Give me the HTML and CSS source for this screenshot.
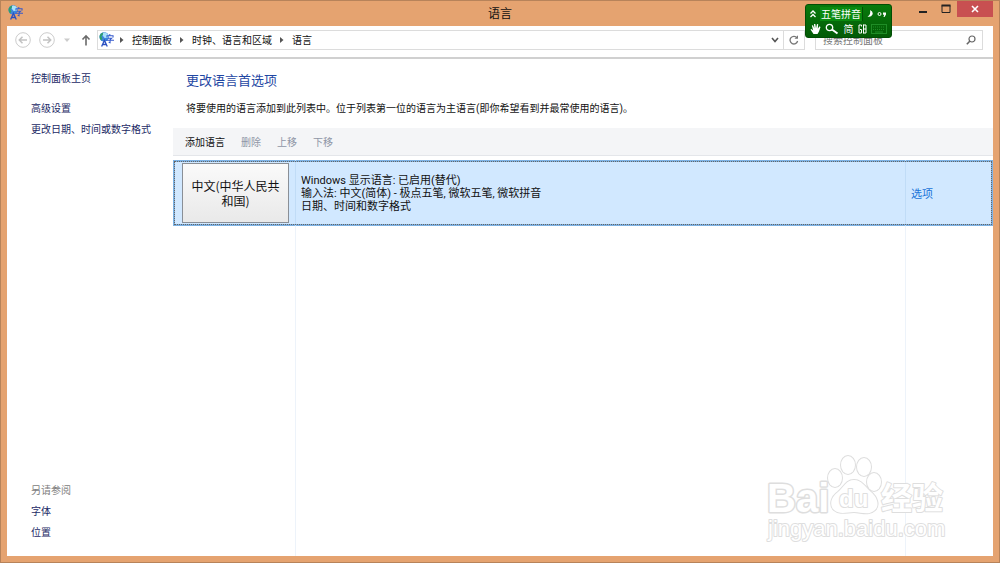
FILE: index.html
```html
<!DOCTYPE html>
<html lang="zh-CN">

<head>
    <meta charset="UTF-8">
    <meta name="viewport" content="width=device-width, initial-scale=1.0">
    <title>语言</title>
    <link rel="stylesheet" href="styles.css">
</head>

<body>
    <svg class="defs" aria-hidden="true">
        <symbol id="lang-icon" viewBox="0 0 16 16">
            <circle cx="5.500" cy="5.200" r="5" fill="#3d86dc" />
            <path d="M4 1Q8 -.5 10 3.500L9.500 6 6 6.500 4 4Z" fill="#a9e2fb" />
            <path d="M.8 3.500Q2 1 4.500 .5L4 3 2.500 4.500 3.500 7 2.500 9Q0 7 .8 3.500Z" fill="#2f9f6a" />
            <path d="M2.800 15.500L5.800 9 8.800 15.500M4 13.300H7.600" fill="none" stroke="#2a4fc0" stroke-width="1.400" />
            <path d="M11.500 2V3.800M8.500 5.800V4H15V5.800M9.500 6.600H13.500L11.800 8.200V11.500L10.300 11M8 8.900H16" fill="none" stroke="#3459cc" stroke-width="1.100" />
        </symbol>
    </svg>

    <div class="window">
        <header class="titlebar">
            <svg class="app-icon"><use href="#lang-icon" /></svg>
            <h1>语言</h1>
            <div class="controls">
                <button type="button" aria-label="最小化"><svg width="8" height="10"><path d="M0 8H8" stroke="#222" stroke-width="2" /></svg></button>
                <button type="button" aria-label="最大化"><svg width="10" height="10"><path d="M1 1.500H9V8.500H1Z" fill="none" stroke="#222" /><path d="M.5 1.500H9.500" stroke="#222" stroke-width="2" /></svg></button>
                <button type="button" class="close" aria-label="关闭"><svg width="8" height="8"><path d="M1 1L7 7M7 1L1 7" stroke="#fff" stroke-width="1.600" /></svg></button>
            </div>
        </header>

        <div class="content">
            <nav class="navbar">
                <button type="button" aria-label="后退"><svg width="16" height="16"><circle cx="8" cy="8" r="7.300" fill="none" stroke="#ccc" /><path d="M12 8H4.500M7.500 4.800L4.300 8 7.500 11.200" fill="none" stroke="#c2c2c2" stroke-width="1.500" /></svg></button>
                <button type="button" aria-label="前进"><svg width="16" height="16"><circle cx="8" cy="8" r="7.300" fill="none" stroke="#ccc" /><path d="M4 8H11.500M8.500 4.800L11.700 8 8.500 11.200" fill="none" stroke="#c2c2c2" stroke-width="1.500" /></svg></button>
                <button type="button" aria-label="最近浏览的位置"><svg width="8" height="8"><path d="M1 2.500H7L4 6Z" fill="#ccc" /></svg></button>
                <button type="button" class="up" aria-label="上移一级"><svg width="10" height="12"><path d="M5 11.500V2M1.500 5.500L5 1.800 8.500 5.500" fill="none" stroke="#6a6a6a" stroke-width="1.600" /></svg></button>

                <div class="address">
                    <svg class="app-icon"><use href="#lang-icon" /></svg>
                    <svg class="arrow" viewBox="0 0 4 6"><path d="M0 0L3.500 3 0 6Z" /></svg>
                    <a href="#">控制面板</a>
                    <svg class="arrow" viewBox="0 0 4 6"><path d="M0 0L3.500 3 0 6Z" /></svg>
                    <a href="#">时钟、语言和区域</a>
                    <svg class="arrow" viewBox="0 0 4 6"><path d="M0 0L3.500 3 0 6Z" /></svg>
                    <a href="#">语言</a>
                    <button type="button" class="history" aria-label="以前的位置"><svg width="8" height="8"><path d="M1 2L4 5.500 7 2" fill="none" stroke="#555" stroke-width="1.600" /></svg></button>
                    <button type="button" class="refresh" aria-label="刷新"><svg width="10" height="10"><path d="M8 3A3.800 3.800 0 1 0 8.600 6" fill="none" stroke="#777" stroke-width="1.300" /><path d="M5.500 3.700H9V.3Z" fill="#777" /></svg></button>
                </div>

                <form class="search">
                    <input type="search" placeholder="搜索控制面板" aria-label="搜索控制面板">
                    <button aria-label="搜索"><svg width="10" height="10"><circle cx="6" cy="4" r="3" fill="none" stroke="#666" stroke-width="1.200" /><path d="M4 6L.8 9.200" stroke="#666" stroke-width="1.600" /></svg></button>
                </form>
            </nav>

            <div class="page">
                <aside class="sidebar">
                    <a href="#" class="home">控制面板主页</a>
                    <a href="#">高级设置</a>
                    <a href="#">更改日期、时间或数字格式</a>
                    <div class="see-also">
                        <h3>另请参阅</h3>
                        <a href="#">字体</a>
                        <a href="#">位置</a>
                    </div>
                </aside>

                <main>
                    <h2>更改语言首选项</h2>
                    <p class="intro">将要使用的语言添加到此列表中。位于列表第一位的语言为主语言(即你希望看到并最常使用的语言)。</p>

                    <div class="toolbar">
                        <button type="button">添加语言</button>
                        <button type="button" disabled>删除</button>
                        <button type="button" disabled>上移</button>
                        <button type="button" disabled>下移</button>
                    </div>

                    <div class="languages">
                        <div class="row selected">
                            <div class="cell name"><button type="button">中文(中华人民共和国)</button></div>
                            <div class="cell details">
                                <p>Windows 显示语言: 已启用(替代)</p>
                                <p>输入法: 中文(简体) - 极点五笔, 微软五笔, 微软拼音</p>
                                <p>日期、时间和数字格式</p>
                            </div>
                            <div class="cell options"><a href="#">选项</a></div>
                        </div>
                        <div class="row rest">
                            <div class="cell"></div>
                            <div class="cell"></div>
                            <div class="cell"></div>
                        </div>
                    </div>
                </main>
            </div>
        </div>
    </div>

    <!-- 输入法浮动条 -->
    <div class="ime">
        <div class="ime-row">
            <svg width="6" height="8"><path d="M.5 3.500L3 1 5.500 3.500M.5 7L3 4.500 5.500 7" fill="none" stroke="#fff" stroke-width="1.300" /></svg>
            <span class="ime-name">五笔拼音</span>
            <svg width="6" height="8"><path d="M3 0Q6.500 1.500 5.500 4.500 4 7.500 .5 6.500 4 5 3 0Z" fill="#fff" /></svg>
            <svg width="10" height="8"><circle cx="2.500" cy="4" r="1.500" fill="none" stroke="#fff" /><path d="M6 2.500H9V4.500L7.500 7H6.500L7.200 4.800H6Z" fill="#fff" /></svg>
        </div>
        <div class="ime-row">
            <svg width="11" height="12"><path d="M3.500 11L.5 6.500 1.500 6 3.200 7.500 1.800 2.500 3 2.300 4.300 5.500 4 1H5.300L6 5.300 7 1 8.200 1.300 7.800 5.800 9.500 3.300 10.500 4 9 8.500 7.500 11Z" fill="#fff" /></svg>
            <svg width="14" height="12"><circle cx="4.500" cy="4.500" r="3.200" fill="none" stroke="#fff" stroke-width="1.300" /><path d="M7 6.500L12.500 10.500" stroke="#fff" stroke-width="2" /></svg>
            <span>简</span>
            <svg width="9" height="10"><path d="M3.500 2.500V1H1V9H3.500V5.500H2M5.500 .5V9.500M5.500 1H8V9H5.500M5.500 5H8" fill="none" stroke="#fff" /></svg>
            <svg width="16" height="10"><rect x=".5" y=".5" width="15" height="9" fill="none" stroke="#1f8d26" /><path d="M2 3H14M2 5.500H14" stroke="#1f8d26" stroke-dasharray="1 1" /><path d="M4 8H12" stroke="#1f8d26" /></svg>
        </div>
    </div>

    <svg class="watermark" width="184" height="92" viewBox="0 0 184 92">
        <g>
            <ellipse cx="71" cy="24" rx="7" ry="9" />
            <ellipse cx="84" cy="11" rx="7" ry="9" />
            <ellipse cx="100" cy="13" rx="7" ry="9" />
            <ellipse cx="110" cy="28" rx="7" ry="9" />
            <path d="M90 26C82 26 80 33 74 38C67 43 65 51 70 56C76 61 83 58 90 58C97 58 105 62 111 56C116 51 113 43 107 38C101 33 98 26 90 26Z" />
        </g>
        <text class="wm-bai" x="3" y="58">Bai</text>
        <text class="wm-du" x="75" y="53">du</text>
        <text class="wm-cn" x="117" y="55">经验</text>
        <text class="wm-url" x="4" y="82">jingyan.baidu.com</text>
    </svg>
</body>

</html>
```
FILE: styles.css
```css
* {
    box-sizing: border-box;
}

body {
    margin: 0;
    font-family: "Noto Sans CJK SC", sans-serif;
    font-size: 10px;
    line-height: 16px;
    color: #111;
}

h1,
h2,
h3,
p {
    margin: 0;
    font-weight: normal;
}

a {
    color: inherit;
    text-decoration: none;
}

a:hover {
    text-decoration: underline;
}

button {
    padding: 0;
    border: none;
    background: none;
    font: inherit;
    color: inherit;
}

svg {
    display: block;
    flex: none;
}

.defs {
    position: absolute;
    width: 0;
    height: 0;
}

.window {
    display: flex;
    flex-direction: column;
    min-height: 100vh;
    padding: 0 6px 6px 6px;
    background: #e5a370;
    border: 1px solid #b7835a;
}

/* title bar */
.titlebar {
    display: grid;
    grid-template-columns: 1fr auto 1fr;
    height: 25px;
}

.app-icon {
    width: 15px;
    height: 15px;
}

.titlebar .app-icon {
    margin: 4px 0 0 1px;
}

.titlebar h1 {
    font-size: 12px;
    line-height: 24px;
}

.controls {
    display: flex;
    justify-content: flex-end;
    align-items: flex-start;
}

.controls button {
    display: flex;
    justify-content: center;
    align-items: center;
    width: 23px;
    height: 16px;
}

.controls .close {
    width: 36px;
    background: #c85051;
}

.content {
    display: flex;
    flex-direction: column;
    flex: 1;
    background: #fff;
}

/* navigation */
.navbar {
    display: flex;
    align-items: center;
    gap: 8px;
    height: 33px;
    padding: 0 10px 4px 8px;
    border-bottom: 2px solid #d0d0d0;
}

.navbar .up {
    margin-right: -2px;
    margin-left: 2px;
}

.address,
.search {
    display: flex;
    align-items: center;
    height: 20px;
    border: 1px solid #dcdcdc;
}

.address {
    flex: 1;
}

.address .app-icon {
    margin: 0 -2px 0 1px;
}

.arrow {
    width: 4px;
    height: 6px;
    margin: 0 8px;
    fill: #555;
}

.address .history {
    margin: 0 4px 0 auto;
}

.address .refresh {
    display: flex;
    align-items: center;
    align-self: stretch;
    padding: 0 5px;
    border-left: 1px solid #dcdcdc;
}

.search {
    width: 168px;
    margin-left: 2px;
    padding: 0 6px 0 7px;
}

.search input {
    flex: 1;
    min-width: 0;
    padding: 0;
    border: none;
    outline: none;
    background: none;
    font: inherit;
}

.search input::placeholder {
    color: #777;
}

/* page */
.page {
    display: flex;
    flex: 1;
}

.sidebar {
    display: flex;
    flex-direction: column;
    gap: 5px;
    width: 166px;
    padding: 11px 0 16px 24px;
    color: #1c2a66;
}

.sidebar .home {
    margin-bottom: 9px;
}

.see-also {
    display: flex;
    flex-direction: column;
    gap: 5px;
    margin-top: auto;
}

.see-also h3 {
    font-size: 10px;
    color: #808080;
}

main {
    display: flex;
    flex-direction: column;
    flex: 1;
}

h2 {
    margin: 10px 0 10px 13px;
    font-size: 13px;
    line-height: 22px;
    color: #1f47a3;
}

.intro {
    margin: 0 0 11px 13px;
    font-family: Roboto, "Noto Sans CJK SC", sans-serif;
}

.toolbar {
    display: flex;
    gap: 16px;
    height: 28px;
    padding-left: 12px;
    background: #f4f5f7;
    border-bottom: 1px solid #e4e6ea;
}

.toolbar button:disabled {
    color: #8f95a6;
}

/* language list */
.languages {
    display: flex;
    flex-direction: column;
    flex: 1;
    margin-top: 4px;
}

.row {
    display: grid;
    grid-template-columns: 123px 1fr 87px;
}

.cell {
    border-right: 1px solid #edf3fa;
}

.cell:last-child {
    border-right: none;
}

.rest {
    flex: 1;
}

.selected {
    height: 66px;
    background: #d1e8ff;
    box-shadow: inset 0 0 0 2px #7db2e4;
    outline: 1px dotted #666;
    outline-offset: -2px;
}

.selected .cell {
    display: flex;
    border-color: #c0dcf7;
}

.name {
    padding: 3px 6px 3px 9px;
}

.name button {
    width: 100%;
    padding: 0 4px;
    border: 1px solid #8a8f96;
    background: linear-gradient(#fafafa, #e9e9e9);
    font-size: 12px;
    line-height: 15px;
}

.details {
    flex-direction: column;
    justify-content: center;
    padding-left: 5px;
    font-family: Roboto, "Noto Sans CJK SC", sans-serif;
    font-size: 11px;
    line-height: 13px;
}

.options {
    align-items: center;
    padding-left: 5px;
    font-size: 11px;
    color: #1a73d9;
}

/* floating input method bar */
.ime {
    position: absolute;
    top: 4px;
    right: 108px;
    width: 87px;
    padding: 1px 4px;
    border: 1px solid #024d04;
    border-radius: 3px;
    background: linear-gradient(#087a0c, #035b06);
    color: #fff;
}

.ime-row {
    display: flex;
    justify-content: space-between;
    align-items: center;
    height: 15px;
}

.ime-name {
    padding: 0 1px;
    border-right: 1px solid #024d04;
    background: #0b8a10;
    line-height: 14px;
}

/* watermark */
.watermark {
    position: absolute;
    right: 52px;
    bottom: 17px;
    fill: #fff;
    stroke: #dedede;
    stroke-width: 2;
    stroke-linejoin: round;
    paint-order: stroke;
    pointer-events: none;
}

.wm-bai {
    font: bold 40px "Liberation Sans", sans-serif;
    stroke-width: 3;
}

.wm-du {
    font: bold 24px "Liberation Sans", sans-serif;
}

.wm-cn {
    font: bold 31px "Noto Sans CJK SC", sans-serif;
}

.wm-url {
    font: 22px "Liberation Sans", sans-serif;
}
```
